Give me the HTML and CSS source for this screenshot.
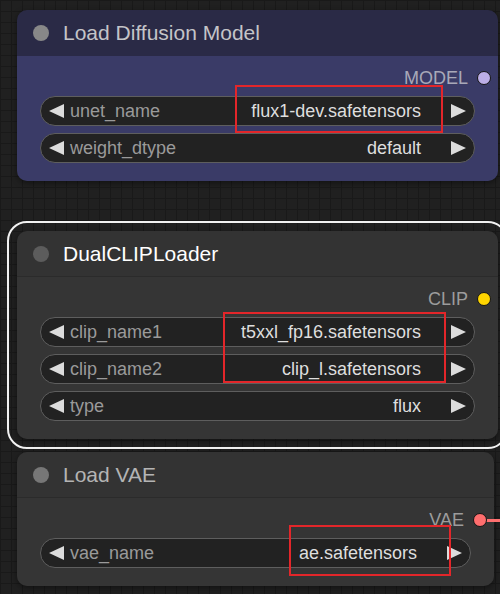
FILE: index.html
```html
<!DOCTYPE html>
<html lang="en">
<head>
    <meta charset="UTF-8">
    <meta name="viewport" content="width=device-width, initial-scale=1.0">
    <title>Flux loaders</title>
    <link rel="stylesheet" href="styles.css">
</head>
<body>
    <div id="canvas">
        <div class="node node-model">
            <div class="node-title">
                <span class="title-dot"></span>
                <span class="title-text">Load Diffusion Model</span>
            </div>
            <div class="node-body">
                <div class="slot">
                    <span class="slot-label">MODEL</span>
                    <span class="slot-dot dot-model"></span>
                </div>
                <div class="widget">
                    <span class="arrow arrow-left"></span>
                    <span class="widget-label">unet_name</span>
                    <span class="widget-value">flux1-dev.safetensors</span>
                    <span class="arrow arrow-right"></span>
                </div>
                <div class="widget">
                    <span class="arrow arrow-left"></span>
                    <span class="widget-label">weight_dtype</span>
                    <span class="widget-value">default</span>
                    <span class="arrow arrow-right"></span>
                </div>
            </div>
            <div class="highlight hl-unet"></div>
        </div>

        <div class="node node-clip selected">
            <div class="node-title">
                <span class="title-dot"></span>
                <span class="title-text">DualCLIPLoader</span>
            </div>
            <div class="node-body">
                <div class="slot">
                    <span class="slot-label">CLIP</span>
                    <span class="slot-dot dot-clip"></span>
                </div>
                <div class="widget">
                    <span class="arrow arrow-left"></span>
                    <span class="widget-label">clip_name1</span>
                    <span class="widget-value">t5xxl_fp16.safetensors</span>
                    <span class="arrow arrow-right"></span>
                </div>
                <div class="widget">
                    <span class="arrow arrow-left"></span>
                    <span class="widget-label">clip_name2</span>
                    <span class="widget-value">clip_l.safetensors</span>
                    <span class="arrow arrow-right"></span>
                </div>
                <div class="widget">
                    <span class="arrow arrow-left"></span>
                    <span class="widget-label">type</span>
                    <span class="widget-value">flux</span>
                    <span class="arrow arrow-right"></span>
                </div>
            </div>
            <div class="highlight hl-clip"></div>
        </div>

        <div class="node node-vae">
            <div class="node-title">
                <span class="title-dot"></span>
                <span class="title-text">Load VAE</span>
            </div>
            <div class="node-body">
                <div class="slot">
                    <span class="slot-label">VAE</span>
                    <span class="link"></span>
                    <span class="slot-dot dot-vae"></span>
                </div>
                <div class="widget">
                    <span class="arrow arrow-left"></span>
                    <span class="widget-label">vae_name</span>
                    <span class="widget-value">ae.safetensors</span>
                    <span class="arrow arrow-right"></span>
                </div>
            </div>
            <div class="highlight hl-vae"></div>
        </div>
    </div>
</body>
</html>
```

FILE: styles.css
```css
body {
    margin: 0;
    font-family: 'Liberation Sans', Arial, sans-serif;
    background-color: #202020;
    background-image:
        linear-gradient(#191919 1px, transparent 1px),
        linear-gradient(90deg, #191919 1px, transparent 1px);
    background-size: 11px 11px;
    height: 594px;
    overflow: hidden;
}
#canvas {
    display: flex;
    flex-direction: column;
    padding: 10px 0 0 17px;
}
.node {
    position: relative;
    width: 481px;
    border-radius: 10px;
    box-shadow: 0 2px 6px rgba(0,0,0,0.45);
}
.node-title {
    display: flex;
    align-items: center;
    height: 46px;
    padding-left: 16px;
    border-radius: 10px 10px 0 0;
}
.title-dot {
    flex-shrink: 0;
    width: 16px;
    height: 16px;
    border-radius: 50%;
    background-color: #888;
    margin-right: 14px;
}
.title-text {
    font-size: 21px;
    color: #c4c4c8;
}
.node-body {
    display: flex;
    flex-direction: column;
    gap: 7px;
    padding: 12px 23px 18px;
    border-radius: 0 0 10px 10px;
}
.slot {
    position: relative;
    display: flex;
    justify-content: flex-end;
    align-items: center;
    height: 20px;
    margin-right: -15px;
    margin-bottom: 1px;
    font-size: 18px;
    color: #9c9c9c;
}
.slot-dot {
    position: relative;
    flex-shrink: 0;
    width: 14px;
    height: 14px;
    margin-left: 9px;
    margin-right: -1px;
    border-radius: 50%;
    box-sizing: border-box;
    border: 1.5px solid #141414;
    z-index: 2;
}
.dot-model { background-color: #bcaee6; }
.dot-clip { background-color: #ffd500; }
.dot-vae { background-color: #ff6e6e; }
.link {
    position: absolute;
    right: -30px;
    top: 9px;
    width: 35px;
    height: 3px;
    background-color: #ff7070;
}
.widget {
    display: flex;
    align-items: center;
    height: 30px;
    box-sizing: border-box;
    padding: 0 8px;
    border: 1px solid #5e5e5e;
    border-radius: 15px;
    background-color: #222;
    font-size: 18px;
}
.arrow {
    flex-shrink: 0;
    width: 0;
    height: 0;
    border-top: 7.5px solid transparent;
    border-bottom: 7.5px solid transparent;
}
.arrow-left {
    border-right: 15px solid #dcdcdc;
}
.arrow-right {
    border-left: 15px solid #dcdcdc;
}
.widget-label {
    margin-left: 6px;
    color: #9a9a9a;
}
.widget-value {
    flex: 1;
    text-align: right;
    margin-right: 30px;
    color: #dedede;
    white-space: nowrap;
}
.highlight {
    position: absolute;
    border: 2px solid #e3262a;
    box-sizing: border-box;
    pointer-events: none;
}

/* Load Diffusion Model */
.node-model .node-title { background-color: #2a2a46; }
.node-model .node-body { background-color: #3a3b67; }
.node-model .slot { color: #a8a8b8; }
.hl-unet {
    left: 218px;
    top: 75px;
    width: 208px;
    height: 48px;
}

/* DualCLIPLoader */
.node-clip {
    margin-top: 50px;
}
.node-clip .node-title {
    background-color: #333;
    border-bottom: 1px solid #2b2b2b;
    height: 45px;
}
.node-clip .node-body { background-color: #353535; }
.node-clip .title-dot { background-color: #5c5c5c; }
.node-clip .title-text { color: #fff; }
.selected {
    outline: 2px solid #f2f2f2;
    outline-offset: 8px;
}
.hl-clip {
    left: 206px;
    top: 81px;
    width: 223px;
    height: 71px;
}

/* Load VAE */
.node-vae {
    width: 477px;
    margin-top: 13px;
}
.node-vae .node-title {
    background-color: #333;
    border-bottom: 1px solid #2b2b2b;
    height: 45px;
}
.node-vae .node-body { background-color: #353535; }
.node-vae .title-dot { background-color: #777; }
.node-vae .title-text { color: #b4b4b4; }
.hl-vae {
    left: 272px;
    top: 73px;
    width: 162px;
    height: 51px;
}
```
